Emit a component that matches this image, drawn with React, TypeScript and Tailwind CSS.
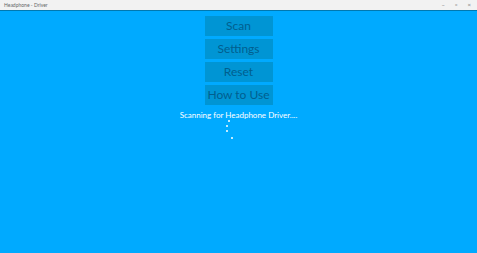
import React from "react";

export default function App() {
  const btn =
    "w-[68px] h-[20px] bg-[#0095d4] text-[#005f8f] text-[12px] leading-[20px] text-center whitespace-nowrap";
  return (
    <div className="w-[477px] h-[253px] flex flex-col bg-[#00aaff]" style={{ fontFamily: 'Lato, "Noto Sans", sans-serif' }}>
      <div className="h-[10px] bg-[#f2f2f2] flex items-center justify-between px-[4px]">
        <span className="text-[5px] leading-[5px] text-[#666]">Headphone - Driver</span>
        <div className="flex items-center gap-[10px] pr-[2px] text-[6px] leading-[6px] text-[#777]">
          <span>–</span>
          <span>▫</span>
          <span>×</span>
        </div>
      </div>
      <div className="h-[1px] bg-[#0078b0]" />
      <div className="flex flex-col items-center pt-[5px] gap-[3px]">
        <div className={btn}>Scan</div>
        <div className={btn}>Settings</div>
        <div className={btn}>Reset</div>
        <div className={btn}>How to Use</div>
        <div className="mt-[1px] text-white text-[8px] leading-[12px] whitespace-nowrap">Scanning for Headphone Driver....</div>
        <div className="relative w-[10px] h-[20px] mt-[-4px] mr-[17px]">
          <span className="absolute w-[2px] h-[2px] rounded-full bg-white left-[3px] top-[0px]" />
          <span className="absolute w-[2px] h-[2px] rounded-full bg-white left-[1px] top-[5px]" />
          <span className="absolute w-[2px] h-[2px] rounded-full bg-white left-[1px] top-[10px]" />
          <span className="absolute w-[2px] h-[2px] rounded-full bg-white left-[6px] top-[17px]" />
        </div>
      </div>
    </div>
  );
}
